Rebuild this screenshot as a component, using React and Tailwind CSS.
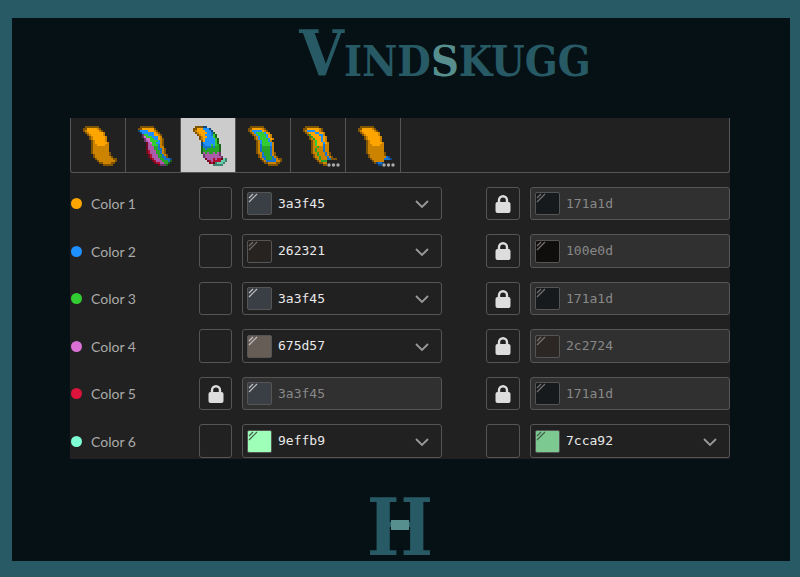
import React, { useState } from 'react';
import clsx from 'clsx';

const PALETTE = {
  o: '#ffa500', O: '#cc8400', b: '#805300',
  d: '#1e90ff', D: '#1873cc', n: '#0f4880',
  g: '#32cd32', G: '#28a428', h: '#196619',
  p: '#da70d6', P: '#ae5aab', q: '#6d386b',
  c: '#dc143c', C: '#b01030', r: '#6e0a1e',
  A: '#66ccaa', e: '#408070',
};

const PLAIN = [
  '.bbbbbbb',
  'bboooooOb',
  'bOooooooOb',
  '.bOoooooooO',
  '..bOooooooO',
  '...bOooooooO',
  '...bOooooooO',
  '....bOoooooO',
  '....bOooooooO',
  '....bOOooooOO',
  '....bOOOOOOOO',
  '....bOOOOOOOO',
  '....bOOOOOOOO',
  '....bOOOOOOOOb',
  '.....bOOOOOOOb',
  '.....bOOOOOOOOb',
  '......bOOOOOOOObb',
  '.......bOOOOOOOOb',
  '........bbOOOObb',
  '..........bbbbb',
];

const STRIPES = [
  '.bbbbbbb',
  'bboooooob',
  'nddddoooOb',
  '.nddddddoOb',
  '..qggdddooOb',
  '..qpgggdddoO',
  '...qppggddoOb',
  '...qPpggggdOb',
  '....rPpggddOb',
  '....rPPgggDOb',
  '....rPPPGGDOO',
  '....rPPPGGDDOb',
  '....rCPPPGGDOb',
  '....rCPPPGGDOb',
  '.....rCPPPGGDOb',
  '.....rCPPPGGDDb',
  '......rCPPPGGDDDn',
  '.......rCPPPGGGDh',
  '........rCCPPGGh',
  '..........rqqqh',
];

const BANDS = [
  '.bbbbnn',
  'bbooodddn',
  'bOoooodddn',
  '.bOooooddDh',
  '..bOoodddDgh',
  '...bOoodddgh',
  '...bOodddddgh',
  '....bodddddgh',
  '....nddddddgh',
  '....nDdddgdgGh',
  '....hDDDDGDGGh',
  '....hGDGGGGGGh',
  '....hGGGGGGGGh',
  '....hPGPGGPGPq',
  '.....qPPPPPPPq',
  '.....qPPPPPPPPq',
  '......rPPPCPCCrAe',
  '.......rCPCCCCAAe',
  '........rCreAAAe',
  '..........eeeee',
];

const LAYERS = [
  '.bbbbbbb',
  'bboooooOb',
  'bOdddddoOb',
  '.bOdggggdoO',
  '..bOdggggdoO',
  '...bOdgggdoO',
  '...bOdggggdoO',
  '....bOdgggdO',
  '....bOdggggdO',
  '....bODggggdO',
  '....bODGGGGDO',
  '....bODGGGGDO',
  '....bODGGGGDO',
  '....bOODGGGDOb',
  '.....bODGGGDOb',
  '.....bODDGGGDOb',
  '......bODGGGDDObb',
  '.......bODDDDDOOb',
  '........bbOOOObb',
  '..........bbbbb',
];

const LINES = [
  '.bbbbbbb',
  'bbooooooOb',
  'bOddddooOb',
  '.bOoooddooO',
  '..bGooooddO',
  '...bGoooodoO',
  '...bOGooodoO',
  '....bOgoodoO',
  '....bOgooodoO',
  '....bOgoooDOO',
  '....bOOGOODOO',
  '....bOGOOODOO',
  '....bOGOOODOO',
  '....bOOGOOODOb',
  '.....bOGOOODOb',
  '.....bOOGOOODOb',
  '......bOGOOODDbbb',
  '.......bOGGG',
  '........bbOO',
  '..........bb',
];

const TIP = [
  ...PLAIN.slice(0, 15),
  '.....bOOOOOOOODn',
  '......bOOOOOODDDn',
  '.......bOOOOO',
  '........bnDDn',
  '..........nn',
];

const tabs = [
  { name: 'Solid', sprite: PLAIN },
  { name: 'Stripes', sprite: STRIPES },
  { name: 'Bands', sprite: BANDS },
  { name: 'Layers', sprite: LAYERS },
  { name: 'Lines', sprite: LINES, more: true },
  { name: 'Tip', sprite: TIP, more: true },
];

const initialRows = [
  { label: 'Color 1', dot: '#ffa500', colors: ['3a3f45', '171a1d'], locked: [false, true] },
  { label: 'Color 2', dot: '#1e90ff', colors: ['262321', '100e0d'], locked: [false, true] },
  { label: 'Color 3', dot: '#32cd32', colors: ['3a3f45', '171a1d'], locked: [false, true] },
  { label: 'Color 4', dot: '#da70d6', colors: ['675d57', '2c2724'], locked: [false, true] },
  { label: 'Color 5', dot: '#dc143c', colors: ['3a3f45', '171a1d'], locked: [true, true] },
  { label: 'Color 6', dot: '#7fffd4', colors: ['9effb9', '7cca92'], locked: [false, false] },
];

const Sprite = ({ rows, more }) => (
  <svg viewBox="0 0 38 42" className="shrink-0 w-[38px] h-[42px]" shapeRendering="crispEdges" aria-hidden="true">
    {rows.map((row, y) =>
      [...row].map((ch, x) =>
        ch === '.' ? null : (
          <rect key={`${x}-${y}`} x={x * 2} y={y * 2} width="2" height="2" fill={PALETTE[ch]} />
        )
      )
    )}
    {more &&
      [26, 30.5, 35].map((cx) => (
        <circle key={cx} cx={cx} cy="39" r="1.7" fill="#aaaaaa" shapeRendering="auto" />
      ))}
  </svg>
);

const LockToggle = ({ checked, onChange, label, className }) => (
  <label className={clsx('relative flex items-center justify-center cursor-pointer', className)}>
    <input
      type="checkbox"
      checked={checked}
      onChange={onChange}
      aria-label={label}
      className="appearance-none w-full h-full rounded-[3px] border border-[#555555]"
    />
    {checked && (
      <svg viewBox="0 0 16 18" className="absolute w-4 h-[18px] pointer-events-none" aria-hidden="true">
        <path d="M4 9V5.3a4 4 0 0 1 8 0V9" fill="none" stroke="#dddddd" strokeWidth="2.4" />
        <rect x="0.5" y="7" width="15" height="11" rx="2" fill="#dddddd" />
      </svg>
    )}
  </label>
);

const Swatch = ({ color }) => {
  const light = parseInt(color.slice(0, 2), 16) > 0x70;
  const dark = parseInt(color.slice(0, 2), 16) < 0x30;
  const stroke = light ? '#3f6149' : dark ? '#76716e' : '#c0c0c0';

  return (
    <span
      className="shrink-0 w-[25px] h-[23px] rounded-[2px] border border-[#555555]"
      style={{ backgroundColor: `#${color}` }}
    >
      <svg viewBox="0 0 10 10" className="w-2.5 h-2.5" aria-hidden="true">
        <path d="M1 5 5 1M1 9 9 1" stroke={stroke} strokeWidth="1.2" fill="none" />
      </svg>
    </span>
  );
};

const ColorField = ({ value, locked, label }) => (
  <div
    className={clsx(
      'flex items-center min-w-0 pl-1 pr-3 rounded-[3px] border border-[#555555] font-["DejaVu_Sans_Mono",monospace] text-[13px]',
      locked ? 'bg-[#303030] text-[#888888]' : 'text-[#e8e8e8]'
    )}
  >
    <Swatch color={value} />
    {locked ? (
      <input
        type="text"
        value={value}
        disabled
        aria-label={label}
        className="flex-1 min-w-0 ml-1.5 leading-5 bg-transparent"
      />
    ) : (
      <>
        <select
          defaultValue={value}
          aria-label={label}
          className="flex-1 min-w-0 ml-1.5 leading-5 appearance-none bg-transparent outline-none"
        >
          <option value={value}>{value}</option>
        </select>
        <svg viewBox="0 0 14 9" className="shrink-0 w-3.5 h-[9px] pointer-events-none" aria-hidden="true">
          <path d="M1 2 7 8 13 2" fill="none" stroke="#999999" strokeWidth="1.8" />
        </svg>
      </>
    )}
  </div>
);

const App = () => {
  const [activeTab, setActiveTab] = useState('Bands');
  const [rows, setRows] = useState(initialRows);

  const toggleLock = (label, side) => {
    setRows((prev) =>
      prev.map((row) =>
        row.label === label
          ? { ...row, locked: row.locked.map((l, i) => (i === side ? !l : l)) }
          : row
      )
    );
  };

  return (
    <div className="flex min-h-screen bg-[#275a65] pt-[18px] pr-2.5 pb-4 pl-3">
      <div className="flex flex-1 flex-col bg-[#051115] pl-[58px] pr-[60px]">
        <header className="h-[100px] pl-[90px] text-center">
          <h1 className="whitespace-nowrap font-['DejaVu_Serif_Condensed','DejaVu_Serif',serif] font-bold text-[43px] leading-[72px] text-[#275a65]">
            <span className="text-[64px]">V</span>IND<span className="text-[#578e8e]">S</span>KUGG
          </h1>
        </header>

        <main className="bg-[#212121]">
          <div role="tablist" className="flex h-[55px] rounded-b-[3px] border border-t-0 border-[#555555]">
            {tabs.map((tab) => (
              <button
                key={tab.name}
                type="button"
                role="tab"
                aria-label={tab.name}
                aria-selected={activeTab === tab.name}
                onClick={() => setActiveTab(tab.name)}
                className={clsx(
                  'flex w-[55px] pl-3 pt-2 border-r border-[#555555]',
                  activeTab === tab.name && 'bg-[#cccccc]'
                )}
              >
                <Sprite rows={tab.sprite} more={tab.more} />
              </button>
            ))}
          </div>

          <div className="flex flex-col gap-3.5 pt-3.5 pb-px">
            {rows.map((row) => (
              <div
                key={row.label}
                className="grid grid-cols-[119px_33px_1fr_24px_34px_1fr] gap-x-2.5 h-[33px] even:h-[34px]"
              >
                <div className="flex items-center gap-[9px] pl-px font-['Lato',sans-serif] text-[14px] text-[#aaaaaa]">
                  <span className="w-[11px] h-[11px] rounded-full" style={{ backgroundColor: row.dot }} />
                  {row.label}
                </div>
                <LockToggle
                  checked={row.locked[0]}
                  onChange={() => toggleLock(row.label, 0)}
                  label={`Lock ${row.label}`}
                />
                <ColorField value={row.colors[0]} locked={row.locked[0]} label={row.label} />
                <LockToggle
                  checked={row.locked[1]}
                  onChange={() => toggleLock(row.label, 1)}
                  label={`Lock ${row.label} shade`}
                  className="col-start-5"
                />
                <ColorField value={row.colors[1]} locked={row.locked[1]} label={`${row.label} shade`} />
              </div>
            ))}
          </div>
        </main>

        <footer className="flex flex-1 items-end justify-center">
          <div className="relative font-['DejaVu_Serif_Condensed','DejaVu_Serif',serif] font-bold text-[78px] leading-[66px] text-[#275a65]">
            H
            <span className="absolute inset-x-6 top-[25px] h-2.5 bg-[#578e8e]" />
          </div>
        </footer>
      </div>
    </div>
  );
};

export default App;
